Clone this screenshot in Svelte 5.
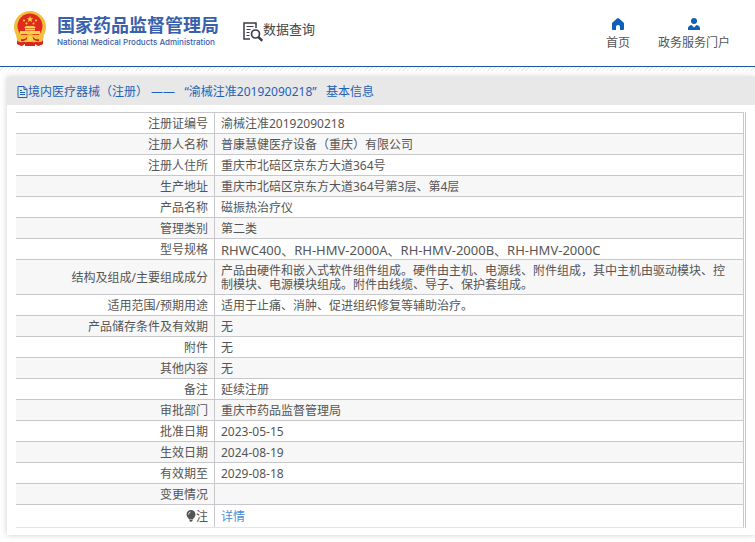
<script lang="ts">
    type Row = { label: string; value: string; code?: boolean };

    const rows: Row[] = [
        { label: '注册证编号', value: '渝械注准20192090218' },
        { label: '注册人名称', value: '普康慧健医疗设备（重庆）有限公司' },
        { label: '注册人住所', value: '重庆市北碚区京东方大道364号' },
        { label: '生产地址', value: '重庆市北碚区京东方大道364号第3层、第4层' },
        { label: '产品名称', value: '磁振热治疗仪' },
        { label: '管理类别', value: '第二类' },
        { label: '型号规格', value: 'RHWC400、RH-HMV-2000A、RH-HMV-2000B、RH-HMV-2000C', code: true },
        { label: '结构及组成/主要组成成分', value: '产品由硬件和嵌入式软件组件组成。硬件由主机、电源线、附件组成，其中主机由驱动模块、控制模块、电源模块组成。附件由线缆、导子、保护套组成。' },
        { label: '适用范围/预期用途', value: '适用于止痛、消肿、促进组织修复等辅助治疗。' },
        { label: '产品储存条件及有效期', value: '无' },
        { label: '附件', value: '无' },
        { label: '其他内容', value: '无' },
        { label: '备注', value: '延续注册' },
        { label: '审批部门', value: '重庆市药品监督管理局' },
        { label: '批准日期', value: '2023-05-15' },
        { label: '生效日期', value: '2024-08-19' },
        { label: '有效期至', value: '2029-08-18' },
        { label: '变更情况', value: '' },
    ];
</script>

<svelte:head>
    <title>数据查询</title>
</svelte:head>

<div class="page" lang="zh-CN">
    <header>
        <a class="brand" href="#home">
            <svg class="emblem" viewBox="0 0 34 36" width="34" height="36" aria-hidden="true">
                <path fill="#d9251c" d="M5 24h24l1 9-5 2-3-2H12l-3 2-5-2z"/>
                <circle cx="17" cy="16" r="16" fill="#f3bd3d"/>
                <circle cx="17" cy="15" r="12.5" fill="#e02a1d"/>
                <path fill="#f9d34c" d="m17 5 .9 2.2 2.4.1-1.9 1.5.7 2.3-2.1-1.3-2.1 1.3.7-2.3-1.9-1.5 2.4-.1z"/>
                <g fill="#f9d34c">
                    <circle cx="11" cy="9.5" r="1"/>
                    <circle cx="23" cy="9.5" r="1"/>
                    <circle cx="13.5" cy="12.5" r="1"/>
                    <circle cx="20.5" cy="12.5" r="1"/>
                    <path d="M11 17l2-2h8l2 2zM12 17.5h10v2H12zM7 20h20v3H7z"/>
                </g>
                <path fill="#f3bd3d" d="M3 25q7-2 10-1 4-2 8 0 3-1 10 1l-2 6q-5 1-8-1l-4 2-4-2q-3 2-8 1z"/>
                <path fill="#d9251c" d="M8 28q4 1 6-2l1 1q-3 4-7 3zM26 28q-4 1-6-2l-1 1q3 4 7 3zM4 30l5 2v3l-5-2zM30 30l-5 2v3l5-2zM12 32l5-2 5 2v3H12z"/>
                <circle cx="17" cy="28" r="3" fill="#f9d34c"/>
            </svg>
            <span class="names">
                <span class="cn">国家药品监督管理局</span>
                <span class="en">National Medical Products Administration</span>
            </span>
        </a>
        <a class="query" href="#query">
            <svg viewBox="0 0 20 20" width="20" height="20" fill="none" stroke="#3c3c46" aria-hidden="true">
                <path stroke-width="1.5" d="M7 17H1V1h12v5"/>
                <path stroke-width="1.2" d="M3.5 4.500h7M3.500 7.500h4M3.500 10.500h3M3.500 13.500h3"/>
                <circle cx="12.5" cy="12" r="4" stroke-width="1.7"/>
                <path stroke-width="2.5" d="m15.500 15.200 3.800 3.600"/>
            </svg>
            <span>数据查询</span>
        </a>
        <nav>
            <a href="#index">
                <svg viewBox="0 0 12 12" width="12" height="12" aria-hidden="true"><path fill="#0f5fb8" d="M6 0q.5 0 1 .4l4.500 4.100q.5.5.5 1.100V11q0 1-1 1H8V9q0-2-2-2T4 9v3H1q-1 0-1-1V5.600Q0 5 .5 4.500L5 .4Q5.500 0 6 0z"/></svg>
                <span>首页</span>
            </a>
            <a href="#portal">
                <svg viewBox="0 0 12 12" width="12" height="12" aria-hidden="true"><circle cx="6" cy="3" r="3" fill="#0f5fb8"/><path fill="#0f5fb8" d="M0 12V10.500Q0 7.500 3.500 7L6 9.500 8.500 7Q12 7.500 12 10.500V12z"/></svg>
                <span>政务服务门户</span>
            </a>
        </nav>
    </header>
    <div class="hatch"></div>

    <main>
        <h1>
            <svg viewBox="0 0 11 12" width="11" height="12" fill="none" stroke="#1f62b5" aria-hidden="true"><path d="M1 .5h6l3 3v8H1zM7 .5v3h3M3 4.500h2M3 6.500h5M3 8.500h5"/></svg>
            <span>境内医疗器械（注册）&nbsp;——&nbsp;&nbsp;&nbsp;“渝械注准20192090218”&nbsp;&nbsp;&nbsp;基本信息</span>
        </h1>
        <div class="frame">
            <table>
                <tbody>
                    {#each rows as row}
                        <tr>
                            <th scope="row">{row.label}</th>
                            <td class:code={row.code}>{row.value}</td>
                        </tr>
                    {/each}
                    <tr class="note">
                        <th scope="row">
                            <svg viewBox="0 0 10 12" width="10" height="12" aria-hidden="true"><path fill="#555" d="M5 0a4.500 4.500 0 0 1 4.500 4.500C9.500 7 7 8 7 9.500H3C3 8 .5 7 .5 4.500A4.500 4.500 0 0 1 5 0zM3.500 10h3v1L5 12l-1.500-1z"/><path fill="none" stroke="#ddd" d="M2.500 4.500Q2.500 2.500 4.500 2"/></svg>注
                        </th>
                        <td><a href="#detail">详情</a></td>
                    </tr>
                </tbody>
            </table>
        </div>
    </main>
</div>

<style>
    :global(body) {
        margin: 0;
        background: #fff;
    }

    .page {
        font-family: "Noto Sans", "Noto Sans CJK SC", sans-serif;
        font-size: 12px;
        line-height: 14px;
        color: #555;
        overflow: hidden;
        padding-bottom: 8px;
    }

    a {
        color: inherit;
        text-decoration: none;
    }

    svg {
        flex: none;
    }

    header {
        display: flex;
        align-items: flex-start;
        box-sizing: border-box;
        height: 67px;
        padding: 0 25px 0 13px;
        border-bottom: 1px solid #1a56a0;
    }

    .brand {
        display: flex;
        gap: 10px;
        padding-top: 11px;
        color: #3960ac;
    }

    .names {
        display: flex;
        flex-direction: column;
        padding-top: 1px;
    }

    .cn {
        font-family: "Noto Sans CJK SC", sans-serif;
        font-size: 18px;
        font-weight: 700;
        line-height: 24px;
    }

    .en {
        font-family: Inter, sans-serif;
        font-size: 8px;
        font-weight: 500;
        line-height: 12px;
    }

    .query {
        display: flex;
        padding-top: 22px;
        margin-left: 24px;
        font-size: 13px;
        line-height: 14px;
        color: #444;
    }

    nav {
        display: flex;
        gap: 28px;
        margin-left: auto;
        padding-top: 18px;
    }

    nav a {
        display: flex;
        flex-direction: column;
        align-items: center;
        gap: 6px;
    }

    .hatch {
        height: 4px;
        background: repeating-linear-gradient(135deg, #fff 0 2px, #eee 2px 3px);
    }

    main {
        margin: 6px 0 0 7px;
        padding-bottom: 7px;
        background: #fff;
        box-shadow: 0 0 6px #ccc;
    }

    h1 {
        display: flex;
        align-items: center;
        box-sizing: border-box;
        height: 28px;
        margin: 0;
        padding: 2px 0 0 10px;
        background: #e8e8e8;
        font-size: 12px;
        font-weight: 400;
        color: #1f62b5;
    }

    .frame {
        margin: 7px 9px 0;
        border-right: 1px solid #c8c8cc;
        padding-right: 1px;
    }

    table {
        width: 100%;
        border-collapse: separate;
        border-spacing: 0;
        border-right: 1px solid #c8c8cc;
        border-bottom: 1px solid #e4e4e4;
    }

    th,
    td {
        padding: 4px 6px 2px;
        border-top: 1px solid #c8c8cc;
        text-align: left;
        font-weight: 400;
    }

    td {
        padding-right: 12px;
    }

    th {
        width: 186px;
        border-right: 1px solid #c8c8cc;
        text-align: right;
    }

    tr:nth-child(even) {
        background: #f7f7f7;
    }

    .code {
        font-size: 13px;
    }

    .note th,
    .note td {
        padding: 5px 6px 3px;
    }

    .note svg {
        vertical-align: -1px;
    }

    .note a {
        color: #4a90d9;
    }
</style>
